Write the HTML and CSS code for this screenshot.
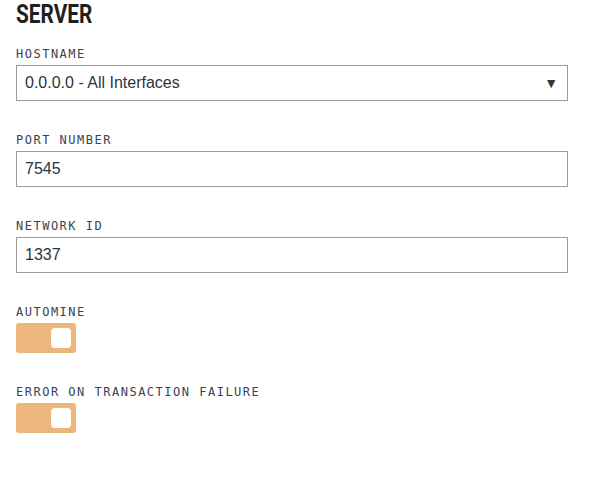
FILE: index.html
```html
<!DOCTYPE html>
<html lang="en">
<head>
  <meta charset="UTF-8" />
  <title>Server</title>
  <link rel="stylesheet" href="styles.css">
</head>
<body>
  <h1 class="title">SERVER</h1>

  <div class="field">
    <label class="label" for="hostname">HOSTNAME</label>
    <div class="select" id="hostname">
      <span class="select-value">0.0.0.0 - All Interfaces</span>
      <span class="select-arrow">&#9660;</span>
    </div>
  </div>

  <div class="field">
    <label class="label" for="port">PORT NUMBER</label>
    <input class="input" id="port" type="text" value="7545">
  </div>

  <div class="field">
    <label class="label" for="network">NETWORK ID</label>
    <input class="input" id="network" type="text" value="1337">
  </div>

  <div class="field">
    <div class="label">AUTOMINE</div>
    <div class="toggle"><div class="knob"></div></div>
  </div>

  <div class="field">
    <div class="label">ERROR ON TRANSACTION FAILURE</div>
    <div class="toggle"><div class="knob"></div></div>
  </div>
</body>
</html>
```

FILE: styles.css
```css
body {
  margin: 0;
  padding: 0 16px;
  background: #fff;
  font-family: "Liberation Sans", Arial, sans-serif;
}
.title {
  margin: 0;
  font-family: Roboto, sans-serif;
  font-weight: 700;
  font-size: 26px;
  line-height: 28px;
  color: #1e1e1e;
  transform: scaleX(0.8);
  transform-origin: left center;
}
.field {
  margin-top: 18px;
  width: 552px;
}
.field + .field {
  margin-top: 31px;
}
.label {
  display: block;
  font-family: "DejaVu Sans Mono", monospace;
  font-size: 12px;
  line-height: 16px;
  letter-spacing: 1.5px;
  color: #3b4252;
  margin-bottom: 3px;
}
.input,
.select {
  display: flex;
  align-items: center;
  box-sizing: border-box;
  width: 100%;
  height: 36px;
  margin: 0;
  padding: 0 8px;
  border: 1px solid #9a9a9a;
  border-radius: 0;
  font-family: "Liberation Sans", Arial, sans-serif;
  font-size: 16px;
  color: #2e3440;
  background: #fff;
  outline: none;
}
.select-value {
  flex: 1;
}
.select-arrow {
  font-size: 14px;
  color: #2e3440;
  margin-right: 1px;
}
.toggle {
  display: flex;
  justify-content: flex-end;
  align-items: center;
  width: 60px;
  height: 30px;
  padding: 0 5px;
  box-sizing: border-box;
  background: #ecb77c;
  border-radius: 3px;
  margin-top: 3px;
}
.knob {
  width: 20px;
  height: 20px;
  background: #fff;
  border-radius: 4px;
}
```
